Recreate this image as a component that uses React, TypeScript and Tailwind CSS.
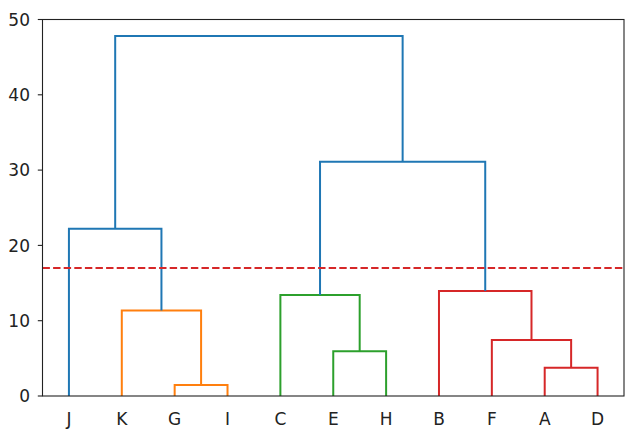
const X0 = 42.5
const X1 = 624
const Y0 = 396
const Y1 = 19.5

const sx = (u: number) => X0 + (u * (X1 - X0)) / 110
const sy = (v: number) => Y0 - (v * (Y0 - Y1)) / 50

const C0 = "#1f77b4"
const C1 = "#ff7f0e"
const C2 = "#2ca02c"
const C3 = "#d62728"

// [xa, xb, ya, yb, h, colour] — one U-shaped link each
const links: [number, number, number, number, number, string][] = [
  [25, 35, 0, 0, 1.46, C1],
  [15, 30, 0, 1.46, 11.35, C1],
  [5, 22.5, 0, 11.35, 22.2, C0],
  [55, 65, 0, 0, 5.95, C2],
  [45, 60, 0, 5.95, 13.4, C2],
  [95, 105, 0, 0, 3.76, C3],
  [85, 100, 0, 3.76, 7.45, C3],
  [75, 92.5, 0, 7.45, 13.95, C3],
  [52.5, 83.75, 13.4, 13.95, 31.1, C0],
  [13.75, 68.125, 22.2, 31.1, 47.8, C0],
]

const leaves = ["J", "K", "G", "I", "C", "E", "H", "B", "F", "A", "D"]
const yticks = [0, 10, 20, 30, 40, 50]

export default function App() {
  return (
    <div className="w-[634px] h-[439px] bg-white">
      <svg width="634" height="439" viewBox="0 0 634 439" className="block" style={{ fontFamily: "'DejaVu Sans', sans-serif" }}>
        {links.map(([xa, xb, ya, yb, h, c], i) => (
          <polyline
            key={i}
            points={`${sx(xa)},${sy(ya)} ${sx(xa)},${sy(h)} ${sx(xb)},${sy(h)} ${sx(xb)},${sy(yb)}`}
            fill="none"
            stroke={c}
            strokeWidth="2"
          />
        ))}
        <line x1={X0} y1={sy(17)} x2={X1} y2={sy(17)} stroke={C3} strokeWidth="2" strokeDasharray="7.4 3.2" />
        <rect x={X0} y={Y1} width={X1 - X0} height={Y0 - Y1} fill="none" stroke="#222" strokeWidth="1.1" />
        {yticks.map((t) => (
          <g key={t}>
            <line x1={X0 - 4.7} y1={sy(t)} x2={X0} y2={sy(t)} stroke="#222" strokeWidth="1.1" />
            <text x={X0 - 12.5} y={sy(t) + 6.2} textAnchor="end" fontSize="17" fill="#222">
              {t}
            </text>
          </g>
        ))}
        {leaves.map((l, i) => (
          <text key={l} x={sx(5 + i * 10)} y={425} textAnchor="middle" fontSize="17" fill="#222">
            {l}
          </text>
        ))}
      </svg>
    </div>
  )
}
